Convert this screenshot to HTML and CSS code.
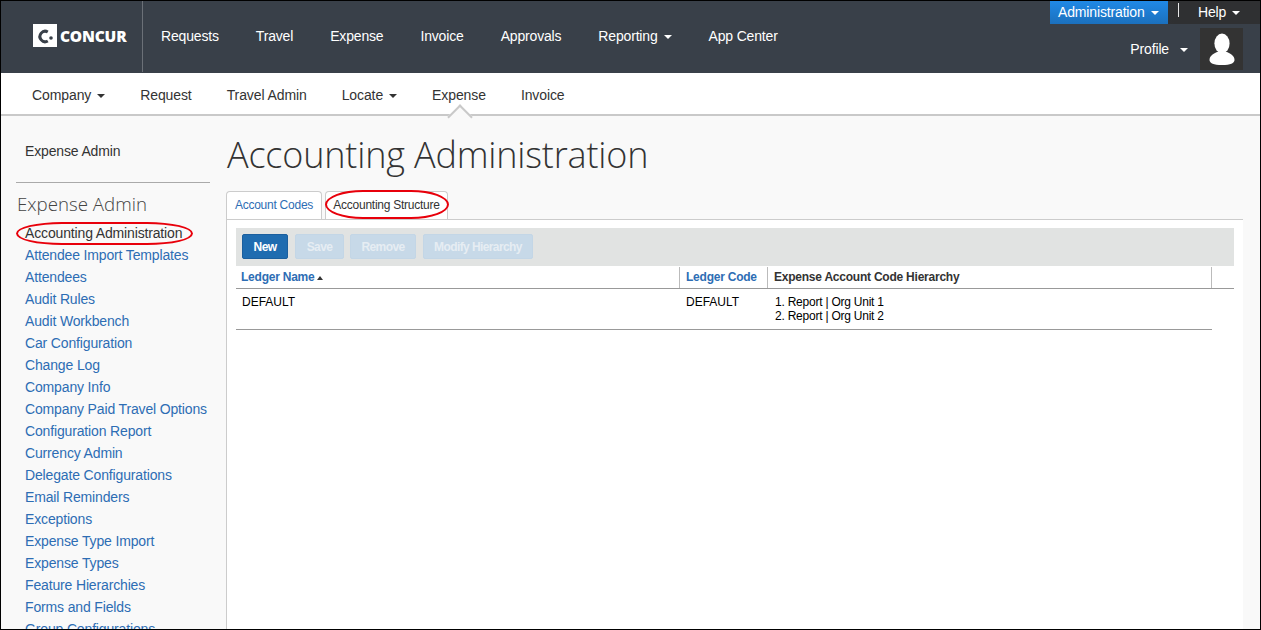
FILE: index.html
```html
<!DOCTYPE html>
<html>
<head>
  <meta charset="utf-8">
  <title>Accounting Administration</title>
  <link rel="stylesheet" href="styles.css">
</head>
<body>
  <div class="frame">
    <div class="header">
      <div class="logo-box">
        <div class="logo">
          <svg class="logo-mark" width="24" height="23" viewBox="0 0 24 23">
            <rect width="24" height="23" fill="#fff"/>
            <path d="M14.800 8A5.200 5.200 0 1 0 14.800 17" fill="none" stroke="#394049" stroke-width="3"/>
            <circle cx="18" cy="14" r="1.800" fill="#394049"/>
          </svg>
          <span class="logo-text">CONCUR</span>
        </div>
      </div>
      <div class="main-nav">
        <a>Requests</a>
        <a>Travel</a>
        <a>Expense</a>
        <a>Invoice</a>
        <a>Approvals</a>
        <a>Reporting<span class="caret caret-gap"></span></a>
        <a>App Center</a>
      </div>
      <div class="user-box">
        <div class="user-top">
          <a class="admin-btn">Administration<span class="caret caret-gap"></span></a>
          <span class="user-sep"></span>
          <a class="help-link">Help<span class="caret caret-gap"></span></a>
        </div>
        <div class="user-bottom">
          <a class="profile-link">Profile<span class="caret caret-wide"></span></a>
          <div class="avatar">
            <svg width="26" height="32" viewBox="0 0 26 32">
              <ellipse cx="13" cy="10.500" rx="7.600" ry="10" fill="#fff"/>
              <path d="M8 19C4 21 .5 23 .5 27c0 3 4 5 12.500 5s12.500-2 12.500-5c0-4-3.500-6-7.500-8z" fill="#fff"/>
            </svg>
          </div>
        </div>
      </div>
    </div>

    <div class="sub-nav">
      <a>Company<span class="caret caret-dark caret-gap"></span></a>
      <a>Request</a>
      <a>Travel Admin</a>
      <a>Locate<span class="caret caret-dark caret-gap"></span></a>
      <a class="current">Expense</a>
      <a>Invoice</a>
    </div>

    <div class="content">
      <div class="sidebar">
        <div class="side-top">Expense Admin</div>
        <div class="side-title">Expense Admin</div>
        <ul class="side-list">
          <li class="active">Accounting Administration<span class="ring ring-side"></span></li>
          <li>Attendee Import Templates</li>
          <li>Attendees</li>
          <li>Audit Rules</li>
          <li>Audit Workbench</li>
          <li>Car Configuration</li>
          <li>Change Log</li>
          <li>Company Info</li>
          <li>Company Paid Travel Options</li>
          <li>Configuration Report</li>
          <li>Currency Admin</li>
          <li>Delegate Configurations</li>
          <li>Email Reminders</li>
          <li>Exceptions</li>
          <li>Expense Type Import</li>
          <li>Expense Types</li>
          <li>Feature Hierarchies</li>
          <li>Forms and Fields</li>
          <li>Group Configurations</li>
        </ul>
      </div>

      <div class="main">
        <h1>Accounting Administration</h1>
        <div class="tabs">
          <a class="tab">Account Codes</a>
          <a class="tab tab-active">Accounting Structure<span class="ring ring-tab"></span></a>
        </div>
        <div class="panel">
          <div class="toolbar">
            <button class="btn btn-new">New</button>
            <button class="btn btn-off btn-save">Save</button>
            <button class="btn btn-off btn-remove">Remove</button>
            <button class="btn btn-off btn-modify">Modify Hierarchy</button>
          </div>
          <div class="row row-head">
            <div class="col col-name sortable">Ledger Name <span class="sort-arrow"></span></div>
            <div class="col col-code sortable">Ledger Code</div>
            <div class="col col-hier">Expense Account Code Hierarchy</div>
            <div class="col col-end"></div>
          </div>
          <div class="row row-data">
            <div class="col col-name">DEFAULT</div>
            <div class="col col-code">DEFAULT</div>
            <div class="col col-hier">
              <div>1. Report | Org Unit 1</div>
              <div>2. Report | Org Unit 2</div>
            </div>
          </div>
        </div>
      </div>
    </div>
  </div>
</body>
</html>
```

FILE: styles.css
```css
* {
  box-sizing: border-box;
}

html, body {
  margin: 0;
  padding: 0;
  height: 100%;
  overflow: hidden;
}

body {
  font-family: "Liberation Sans", Arial, sans-serif;
  font-size: 14px;
  letter-spacing: -0.150px;
  color: #333;
}

.frame {
  height: 630px;
  border: 1px solid #000;
  overflow: hidden;
  background-color: #f9f9f9;
}

/* top bar */
.header {
  display: flex;
  height: 72px;
  background-color: #394049;
  color: #fff;
}

.logo-box {
  width: 142px;
  margin-bottom: 1px;
  padding: 23px 0 0 32px;
  border-right: 1px solid #6b7077;
}

.logo {
  display: flex;
  align-items: center;
  height: 23px;
}

.logo-text {
  margin-left: 3px;
  font-family: "Open Sans", sans-serif;
  font-size: 15.500px;
  font-weight: 800;
  letter-spacing: -0.200px;
}

.main-nav {
  display: flex;
  gap: 37px;
  padding: 27px 0 0 18px;
  line-height: 16px;
  letter-spacing: -0.170px;
}

.user-box {
  margin-left: auto;
  width: 211px;
  display: flex;
  flex-direction: column;
}

.user-top {
  display: flex;
  height: 23px;
  padding-left: 1px;
  background: linear-gradient(to right, #394049, #2f3032 60%);
}

.admin-btn {
  width: 118px;
  height: 23px;
  padding: 3px 0 0 8px;
  line-height: 16px;
  background: linear-gradient(to bottom, #2089e6, #1b70bd);
}

.user-sep {
  width: 1px;
  height: 14px;
  margin: 2px 0 0 10px;
  background-color: #e8e8e8;
}

.help-link {
  margin-left: 19px;
  padding-top: 3px;
  line-height: 16px;
}

.user-bottom {
  display: flex;
  justify-content: flex-end;
  padding: 4px 17px 0 0;
}

.profile-link {
  margin-right: 12px;
  padding-top: 13px;
  line-height: 16px;
}

.avatar {
  display: flex;
  justify-content: center;
  align-items: flex-end;
  width: 43px;
  height: 42px;
  padding-bottom: 5px;
  background-color: #333;
}

.caret {
  display: inline-block;
  width: 0;
  height: 0;
  vertical-align: middle;
  border-top: 4px solid #fff;
  border-left: 4px solid transparent;
  border-right: 4px solid transparent;
}

.caret-dark {
  border-top-color: #333;
}

.caret-gap {
  margin-left: 6px;
}

.caret-wide {
  margin-left: 11px;
}

/* second row */
.sub-nav {
  display: flex;
  gap: 35px;
  height: 43px;
  padding: 14px 0 0 31px;
  line-height: 16px;
  letter-spacing: -0.100px;
  background-color: #fff;
  border-bottom: 2px solid #c9c9c9;
}

.sub-nav a {
  position: relative;
  height: 27px;
}

.sub-nav .current::after {
  content: "";
  position: absolute;
  left: 19px;
  bottom: -12px;
  width: 16px;
  height: 16px;
  transform: rotate(45deg);
  background-color: #f9f9f9;
  border-top: 2px solid #c9c9c9;
  border-left: 2px solid #c9c9c9;
}

.content {
  display: flex;
  height: 515px;
}

/* left menu */
.sidebar {
  width: 225px;
  padding-left: 15px;
}

.side-top {
  width: 194px;
  height: 67px;
  padding: 27px 0 0 9px;
  line-height: 16px;
  border-bottom: 1px solid #aaa;
}

.side-title {
  margin: 9px 0 0 1px;
  font-family: "Open Sans", sans-serif;
  font-size: 18.700px;
  font-weight: 300;
  line-height: 24px;
  letter-spacing: 0;
  color: #444;
}

.side-list {
  list-style-type: none;
  margin: 6px 0 0 0;
  padding: 0 0 0 9px;
}

.side-list li {
  position: relative;
  height: 22px;
  line-height: 22px;
  white-space: nowrap;
  color: #2d6db4;
}

.side-list .active {
  color: #333;
}

.ring {
  position: absolute;
  border: 2px solid #e8000b;
}

.ring-side {
  left: -9px;
  top: 0;
  width: 177px;
  height: 23px;
  border-radius: 46px / 50%;
}

/* main area */
.main {
  flex-grow: 1;
  padding: 0 17px 0 0;
}

h1 {
  margin: 0;
  height: 75px;
  padding: 17px 0 0 1px;
  font-family: "Open Sans", sans-serif;
  font-size: 36px;
  font-weight: 300;
  line-height: 44px;
  letter-spacing: -0.180px;
  color: #333;
}

.tabs {
  display: flex;
  gap: 3px;
  height: 28px;
}

.tab {
  position: relative;
  height: 28px;
  padding-top: 6px;
  font-size: 12px;
  line-height: 14px;
  letter-spacing: -0.250px;
  text-align: center;
  color: #2d6db4;
  background-color: #fff;
  border: 1px solid #ccc;
  border-bottom: none;
  border-radius: 4px 4px 0 0;
  width: 96px;
}

.tab-active {
  width: 123px;
  color: #333;
}

.ring-tab {
  left: -1px;
  top: -2px;
  width: 124px;
  height: 29px;
  border-radius: 38px / 50%;
}

.panel {
  height: 420px;
  padding: 8px 9px 0 9px;
  background-color: #fff;
  border-top: 1px solid #ccc;
  border-left: 1px solid #ccc;
}

.toolbar {
  display: flex;
  height: 38px;
  padding: 6px 0 0 6px;
  background-color: #e1e3e2;
}

.btn {
  height: 25px;
  margin: 0;
  padding: 0;
  font-family: "Liberation Sans", Arial, sans-serif;
  font-size: 12px;
  font-weight: bold;
  letter-spacing: -0.600px;
  color: #fff;
  border-radius: 2px;
  border: 1px solid #1b5f9e;
}

.btn-new {
  width: 46px;
  background-color: #1f6cb0;
}

.btn-off {
  color: #e6edf3;
  background-color: #c7d9e8;
  border-color: #c3d6e6;
}

.btn-save {
  width: 49px;
  margin-left: 7px;
}

.btn-remove {
  width: 66px;
  margin-left: 6px;
}

.btn-modify {
  width: 110px;
  margin-left: 7px;
}

.row {
  display: flex;
  font-size: 12px;
  letter-spacing: -0.230px;
}

.row-head {
  height: 23px;
  font-weight: bold;
  border-bottom: 1px solid #999;
  line-height: 20px;
}

.row-data {
  width: 976px;
  height: 41px;
  color: #000;
  border-bottom: 1px solid #999;
}

.col {
  padding-left: 6px;
}

.col-name {
  width: 444px;
}

.col-code {
  width: 88px;
}

.col-hier {
  width: 444px;
}

.row-head .col {
  height: 21px;
  margin-top: 1px;
  border-right: 1px solid #bbb;
}

.row-head .col-name {
  padding-left: 5px;
}

.row-head .col-end {
  border-right: none;
}

.row-data .col {
  padding-top: 6px;
  line-height: 14px;
}

.row-data .col-name,
.row-data .col-code {
  letter-spacing: 0;
}

.row-data .col-hier {
  padding-left: 7px;
}

.sortable {
  color: #2d6db4;
}

.sort-arrow {
  display: inline-block;
  width: 0;
  height: 0;
  margin-left: -1px;
  vertical-align: middle;
  border-bottom: 4px solid #333;
  border-left: 3px solid transparent;
  border-right: 3px solid transparent;
}
```
